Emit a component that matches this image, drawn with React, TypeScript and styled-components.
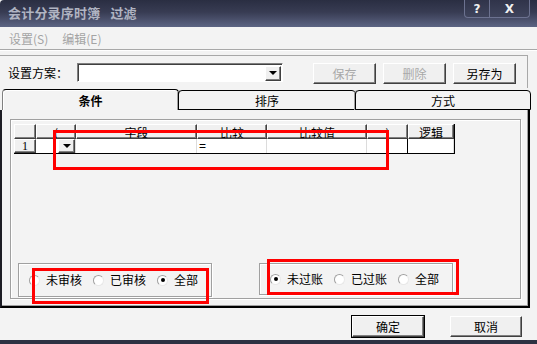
import React from 'react';
import styled, {createGlobalStyle, css} from 'styled-components';

const GlobalStyle = createGlobalStyle`
    html, body {
        margin: 0;
        padding: 0;
        background: #f3f3f3;
    }
    body {
        font-family: "Noto Sans CJK SC", "DejaVu Sans", sans-serif;
        font-size: 12px;
        color: #000;
    }
`;

const raised = css`
    border: 1px solid;
    border-color: #fff #404040 #404040 #fff;
    box-shadow: inset -1px -1px 0 #808080;
    background: #f0f0f0;
`;

const etched = css`
    border: 1px solid #a0a0a0;
    box-shadow: 1px 1px 0 #fff, inset 1px 1px 0 #fff;
`;

const Window = styled.div`
    position: relative;
    width: 537px;
    height: 344px;
    display: flex;
    flex-direction: column;
    background: #f3f3f3;
    overflow: hidden;
`;

const TitleBar = styled.div`
    height: 27px;
    flex-shrink: 0;
    display: flex;
    align-items: flex-start;
    justify-content: space-between;
    background: linear-gradient(#2a2e42 0%, #383c53 45%, #5c6483 100%);
    border-top-left-radius: 4px;
`;

const Title = styled.div`
    padding: 5px 0 0 8px;
    font-size: 13px;
    font-weight: bold;
    line-height: 16px;
    color: #b0b4c2;
    letter-spacing: 0.2px;

    span {
        margin-left: 10px;
    }
`;

const Caption = styled.div`
    display: flex;
    margin-right: 7px;
    height: 17px;
    border: 1px solid #6c7290;
    border-top: none;
    border-radius: 0 0 4px 4px;
    background: linear-gradient(#30344a, #3f445c);
`;

const CaptionButton = styled.div<{$w: number; $sep?: boolean}>`
    width: ${p => p.$w}px;
    display: flex;
    align-items: center;
    justify-content: center;
    font-family: "DejaVu Sans", sans-serif;
    font-size: 12px;
    font-weight: bold;
    color: #f0f0f0;
    border-right: ${p => (p.$sep ? '1px solid #6c7290' : 'none')};
`;

const MenuBar = styled.div`
    height: 22px;
    flex-shrink: 0;
    display: flex;
    align-items: center;
    gap: 14px;
    padding-left: 9px;
    color: #a4a4a4;
    border-bottom: 1px solid #a8a8a8;
    box-shadow: 0 1px 0 #fff;
`;

const Toolbar = styled.div`
    margin-top: 5px;
    width: 528px;
    height: 33px;
    box-sizing: border-box;
    flex-shrink: 0;
    display: flex;
    align-items: flex-start;
    padding: 7px 0 0 8px;
    border-top: 1px solid #a8a8a8;
    border-right: 1px solid #a8a8a8;
`;

const Label = styled.div`
    line-height: 20px;
    width: 69px;
`;

const Combo = styled.div`
    width: 206px;
    height: 19px;
    box-sizing: border-box;
    display: flex;
    justify-content: flex-end;
    align-items: center;
    padding-right: 1px;
    background: #fff;
    border: 1px solid;
    border-color: #808080 #fff #fff #808080;
    box-shadow: inset 1px 1px 0 #404040;
`;

const ComboArrow = styled.div`
    ${raised};
    width: 16px;
    height: 15px;
    box-sizing: border-box;
    display: flex;
    align-items: center;
    justify-content: center;
    margin-top: 1px;

    &::after {
        content: '';
        border-left: 4px solid transparent;
        border-right: 4px solid transparent;
        border-top: 4px solid #000;
    }
`;

const Buttons = styled.div`
    display: flex;
    gap: 7px;
    margin-left: 30px;
`;

const Button = styled.div<{$disabled?: boolean; $default?: boolean; $w?: number}>`
    ${raised};
    width: ${p => p.$w ?? 63}px;
    height: 21px;
    box-sizing: border-box;
    display: flex;
    align-items: center;
    justify-content: center;
    color: ${p => (p.$disabled ? '#a8a8a8' : '#000')};
    ${p =>
        p.$default &&
        css`
            outline: 1px solid #000;
            outline-offset: 0;
        `}
`;

const TabRow = styled.div`
    height: 22px;
    flex-shrink: 0;
    display: flex;
    align-items: flex-end;
    padding-left: 2px;
`;

const Tab = styled.div<{$w: number; $active?: boolean}>`
    width: ${p => p.$w}px;
    height: ${p => (p.$active ? 21 : 20)}px;
    box-sizing: border-box;
    display: flex;
    align-items: center;
    justify-content: center;
    border: 1px solid #000;
    border-bottom: ${p => (p.$active ? 'none' : '1px solid #000')};
    border-left-color: ${p => (p.$active ? '#808080' : '#000')};
    border-radius: 4px 4px 0 0;
    box-shadow: ${p => (p.$active ? 'inset 1px 1px 0 #fff' : '-1px 0 0 #a0a0a0')};
    font-weight: ${p => (p.$active ? 'bold' : 'normal')};
    padding-top: 1px;

    & + & {
        margin-left: -1px;
    }
`;

const Panel = styled.div`
    width: 530px;
    height: 198px;
    box-sizing: border-box;
    flex-shrink: 0;
    padding: 9px 7px 5px 8px;
    border-left: 2px solid #1c1c24;
    border-right: 2px solid #000;
    border-bottom: 2px solid #000;
    box-shadow: inset -1px -1px 0 #a0a0a0;
`;

const Frame = styled.div`
    ${etched};
    height: 180px;
    box-sizing: border-box;
    display: flex;
    flex-direction: column;
    justify-content: space-between;
    padding: 4px 0 1px 3px;
`;

const Grid = styled.div`
    display: grid;
    grid-template-columns: 22px 40px 121px 70px 100px 41px 46px;
    grid-template-rows: 15px 14px;
    width: max-content;
    border-right: 1px solid #000;
    border-bottom: 1px solid #000;
`;

const HeadCell = styled.div`
    ${raised};
    box-sizing: border-box;
    display: flex;
    align-items: center;
    justify-content: center;
    line-height: 12px;
    padding-top: 2px;
    overflow: hidden;
`;

const RowHead = styled(HeadCell)`
    font-family: "Liberation Serif", serif;
    padding-top: 0;
`;

const Cell = styled.div<{$dark?: boolean}>`
    background: #fff;
    box-sizing: border-box;
    border-right: 1px solid ${p => (p.$dark ? '#000' : '#dcdcdc')};
    display: flex;
    align-items: center;
    justify-content: flex-end;
    padding-left: 2px;
    line-height: 12px;
    font-family: "Liberation Sans", sans-serif;
`;

const TextCell = styled(Cell)`
    justify-content: flex-start;
`;

const DropButton = styled(ComboArrow)`
    width: 17px;
    height: 14px;
    margin: 0;
`;

const GroupRow = styled.div`
    display: flex;
    align-items: flex-start;
    gap: 47px;
    padding-left: 4px;
`;

const Group = styled.div<{$h: number}>`
    ${etched};
    width: 194px;
    height: ${p => p.$h}px;
    box-sizing: border-box;
    display: flex;
    align-items: center;
    padding-left: 10px;
    white-space: nowrap;
`;

const RadioItem = styled.div`
    display: flex;
    align-items: center;
    flex-shrink: 0;
    margin-right: 11px;
    line-height: 12px;
    white-space: nowrap;
`;

const RadioDot = styled.span<{$on?: boolean}>`
    width: 11px;
    height: 11px;
    flex-shrink: 0;
    box-sizing: border-box;
    border-radius: 50%;
    margin-right: 6px;
    background: #fff;
    border: 1px solid;
    border-color: #a0a0a0 #e8e8e8 #e8e8e8 #a0a0a0;
    display: flex;
    align-items: center;
    justify-content: center;

    &::after {
        content: '';
        width: 4px;
        height: 4px;
        border-radius: 50%;
        background: ${p => (p.$on ? '#000' : 'transparent')};
    }
`;

const Footer = styled.div`
    flex: 1;
    display: flex;
    justify-content: flex-end;
    align-items: flex-start;
    gap: 26px;
    padding: 8px 15px 0 0;
    border-bottom: 4px solid #2d3142;
`;

const Mark = styled.div<{$x: number; $y: number; $w: number; $h: number}>`
    position: absolute;
    left: ${p => p.$x}px;
    top: ${p => p.$y}px;
    width: ${p => p.$w}px;
    height: ${p => p.$h}px;
    box-sizing: border-box;
    border: 3px solid #f00;
    pointer-events: none;
`;

function Radio({label, on}: {label: string; on?: boolean}) {
    return (
        <RadioItem>
            <RadioDot $on={on} />
            {label}
        </RadioItem>
    );
}

export default function App() {
    return (
        <Window>
            <GlobalStyle />
            <TitleBar>
                <Title>
                    会计分录序时簿<span>过滤</span>
                </Title>
                <Caption>
                    <CaptionButton $w={24} $sep>?</CaptionButton>
                    <CaptionButton $w={39}>X</CaptionButton>
                </Caption>
            </TitleBar>
            <MenuBar>
                <span>设置(S)</span>
                <span>编辑(E)</span>
            </MenuBar>
            <Toolbar>
                <Label>设置方案：</Label>
                <Combo>
                    <ComboArrow />
                </Combo>
                <Buttons>
                    <Button $disabled>保存</Button>
                    <Button $disabled>删除</Button>
                    <Button>另存为</Button>
                </Buttons>
            </Toolbar>
            <TabRow>
                <Tab $w={177} $active>条件</Tab>
                <Tab $w={178}>排序</Tab>
                <Tab $w={176}>方式</Tab>
            </TabRow>
            <Panel>
                <Frame>
                    <Grid>
                        <HeadCell />
                        <HeadCell>(</HeadCell>
                        <HeadCell>字段</HeadCell>
                        <HeadCell>比较</HeadCell>
                        <HeadCell>比较值</HeadCell>
                        <HeadCell>)</HeadCell>
                        <HeadCell>逻辑</HeadCell>
                        <RowHead>1</RowHead>
                        <Cell>
                            <DropButton />
                        </Cell>
                        <Cell />
                        <TextCell>=</TextCell>
                        <Cell />
                        <Cell $dark />
                        <Cell />
                    </Grid>
                    <GroupRow>
                        <Group $h={34}>
                            <Radio label="未审核" />
                            <Radio label="已审核" />
                            <Radio label="全部" on />
                        </Group>
                        <Group $h={32}>
                            <Radio label="未过账" on />
                            <Radio label="已过账" />
                            <Radio label="全部" />
                        </Group>
                    </GroupRow>
                </Frame>
            </Panel>
            <Footer>
                <Button $w={72} $default>确定</Button>
                <Button $w={72}>取消</Button>
            </Footer>
            <Mark $x={53} $y={130} $w={336} $h={40} />
            <Mark $x={32} $y={268} $w={177} $h={36} />
            <Mark $x={267} $y={259} $w={192} $h={36} />
        </Window>
    );
}
